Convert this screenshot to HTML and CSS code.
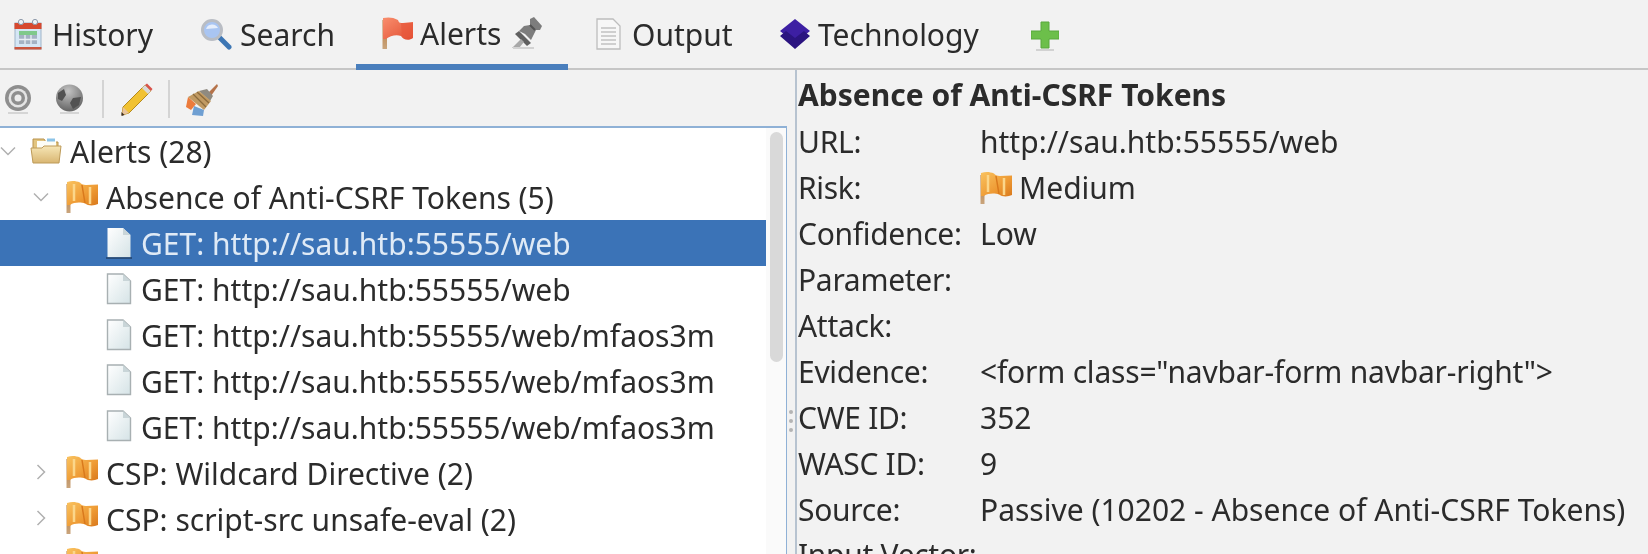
FILE: index.html
```html
<!DOCTYPE html>
<html lang="en">
<head>
  <meta charset="UTF-8" />
  <title>Alerts</title>
  <link rel="stylesheet" href="styles.css">
</head>
<body>
  <svg class="defs" width="0" height="0">
    <defs>
      <linearGradient id="flagOrange" x1="0" y1="0" x2="1" y2="1">
        <stop offset="0" stop-color="#f9c25f"/>
        <stop offset="0.6" stop-color="#ee9a34"/>
        <stop offset="1" stop-color="#d9791c"/>
      </linearGradient>
      <linearGradient id="flagRed" x1="0" y1="0" x2="1" y2="1">
        <stop offset="0" stop-color="#f98f6e"/>
        <stop offset="1" stop-color="#e14c30"/>
      </linearGradient>
      <linearGradient id="poleFade" x1="0" y1="0" x2="0" y2="1">
        <stop offset="0" stop-color="#b5783a"/>
        <stop offset="1" stop-color="#c9a47c"/>
      </linearGradient>
      <linearGradient id="docFill" x1="0" y1="0" x2="1" y2="1">
        <stop offset="0" stop-color="#ffffff"/>
        <stop offset="1" stop-color="#d5e3e6"/>
      </linearGradient>
      <linearGradient id="folderFill" x1="0" y1="0" x2="0" y2="1">
        <stop offset="0" stop-color="#f6e6b6"/>
        <stop offset="1" stop-color="#d9b672"/>
      </linearGradient>
      <radialGradient id="greyBall" cx="0.45" cy="0.25" r="0.8">
        <stop offset="0" stop-color="#c4c4c4"/>
        <stop offset="1" stop-color="#5e5e5e"/>
      </radialGradient>

      <symbol id="flag-orange" viewBox="0 0 32 32">
        <rect x="0.500" y="3" width="4" height="29" fill="url(#poleFade)"/>
        <path d="M1 1 C6 -0.500 10 0 14 1.500 C15 3 17 4 20 4 L32 3.500 L32 23 C28 25 22 25 19 22.500 C15 21 8 21 4 24 L1 24 Z" fill="url(#flagOrange)"/>
        <path d="M8 3 V20 M24 6 V23" stroke="#fbd68a" stroke-width="2.500" fill="none"/>
        <path d="M16 4 L19 22" stroke="#d9791c" stroke-width="1.500" fill="none"/>
      </symbol>
      <symbol id="flag-red" viewBox="0 0 31 32">
        <rect x="0.500" y="3" width="4.500" height="29" fill="url(#poleFade)"/>
        <path d="M1 1 C6 0 11 0 16 3 C17 6 18 6 21 6 L31 5 L31 21 C27 24 21 23 19 19 C14 17 8 19 4 22 L1 22 Z" fill="url(#flagRed)"/>
        <path d="M19 6 L20 19 L31 21 L31 6 Z" fill="#e8573a" opacity="0.6"/>
      </symbol>
      <symbol id="doc" viewBox="0 0 26 32">
        <path d="M1.500 1 H17 L24.500 8 V30.500 H1.500 Z" fill="url(#docFill)" stroke="#a8b0b2" stroke-width="1.400"/>
        <path d="M17 1 V8 H24.500 Z" fill="#c9d5d8"/>
      </symbol>
      <symbol id="doc-selected" viewBox="0 0 26 32">
        <path d="M1.500 1 H17 L24.500 8 V30.500 H1.500 Z" fill="url(#docFill)"/>
        <path d="M17 1 V8 H24.500 Z" fill="#c9d5d8"/>
        <path d="M0 31 H26" stroke="#24466f" stroke-width="1.600"/>
      </symbol>
      <symbol id="folder" viewBox="0 0 32 28">
        <path d="M3 2 H14 L16 5 H28 V12 H3 Z" fill="#e2c47f" stroke="#b8924d"/>
        <rect x="7" y="4" width="19" height="8" fill="#fdfdf6"/>
        <rect x="17" y="1.500" width="8" height="3" fill="#8cc4e8"/>
        <path d="M1 11 H12 L14 9 H31 L29 26 H3 Z" fill="url(#folderFill)" stroke="#bd9a58"/>
      </symbol>
      <symbol id="twisty-open" viewBox="0 0 16 10">
        <path d="M1 1.500 L8 8.500 L15 1.500" fill="none" stroke="#b0b0b0" stroke-width="1.500"/>
      </symbol>
      <symbol id="twisty-closed" viewBox="0 0 10 16">
        <path d="M1.500 1 L8.500 8 L1.500 15" fill="none" stroke="#b0b0b0" stroke-width="1.500"/>
      </symbol>
    </defs>
  </svg>

  <div class="tabs">
    <div class="tab tab-history">
      <svg class="tab-icon" width="28" height="32" viewBox="0 0 28 32">
        <rect x="1" y="5" width="26" height="26" fill="#d5e6f5" stroke="#9fb4c8"/>
        <rect x="0.500" y="5" width="27" height="6" fill="#d6492f"/>
        <rect x="0.500" y="29" width="27" height="2.500" fill="#c9553e"/>
        <circle cx="7" cy="4" r="2.600" fill="#eef3f7" stroke="#8b97a8"/>
        <circle cx="21" cy="4" r="2.600" fill="#eef3f7" stroke="#8b97a8"/>
        <rect x="5" y="13" width="18" height="4" fill="#7fc98b"/>
        <rect x="5" y="17" width="18" height="9" fill="#a4b2c4"/>
        <path d="M5 21.500 H23 M11 17 V26 M17 17 V26" stroke="#e8eef4" stroke-width="1.300"/>
      </svg>
      <span>History</span>
    </div>
    <div class="tab tab-search">
      <svg class="tab-icon" width="32" height="32" viewBox="0 0 32 32">
        <path d="M19 19 L29 29" stroke="#3d76b4" stroke-width="5" stroke-linecap="round"/>
        <circle cx="12" cy="12" r="9.500" fill="#a9c5f2" stroke="#b9bdc4" stroke-width="3"/>
        <path d="M6 11 A6.500 6.500 0 0 1 18 10 Z" fill="#e6eefb"/>
      </svg>
      <span>Search</span>
    </div>
    <div class="tab tab-alerts active">
      <svg class="tab-icon" width="31" height="32"><use href="#flag-red"/></svg>
      <span>Alerts</span>
      <svg class="pin" width="33" height="32" viewBox="0 0 33 32">
        <path d="M20 2 L24 0 L32 9 L30 13 L26 13 L21 23 L15 17 L9 14 L14 9 L20 8 Z" fill="#7d7d7d"/>
        <path d="M9 14 L21 26 L17 29 L5 17 Z" fill="#606060"/>
        <path d="M11 22 L2 31 L9 31 L14 25 Z" fill="#a8a8a8"/>
        <path d="M20 8 L25 13" stroke="#525252" stroke-width="2"/>
        <path d="M3 31 H24" stroke="#d2d2d2" stroke-width="2"/>
      </svg>
    </div>
    <div class="tab tab-output">
      <svg class="tab-icon" width="25" height="32" viewBox="0 0 25 32">
        <path d="M1 1 H17 L24 8 V31 H1 Z" fill="#f7f7f7" stroke="#bdbdbd" stroke-width="1.300"/>
        <path d="M5 10 H20 M5 14 H20 M5 18 H20 M5 22 H20 M5 26 H20" stroke="#c2c2c2" stroke-width="1.500"/>
      </svg>
      <span>Output</span>
    </div>
    <div class="tab tab-tech">
      <svg class="tab-icon" width="32" height="32" viewBox="0 0 32 32">
        <path d="M16 1 L31 13 L16 25 L1 13 Z" fill="#3d1fa3"/>
        <path d="M1 18 L7 13 L16 20 L25 13 L31 18 L16 31 Z" fill="#2b1480"/>
      </svg>
      <span>Technology</span>
    </div>
    <div class="tab tab-add">
      <svg width="28" height="32" viewBox="0 0 28 32">
        <path d="M10 2 H18 V11 H28 V19 H18 V28 H10 V19 H0 V11 H10 Z" fill="#6cbf4a" stroke="#58a83c"/>
        <path d="M5 30 H23" stroke="#d2d2d2" stroke-width="2"/>
      </svg>
    </div>
  </div>

  <div class="main">
    <div class="left-pane">
      <div class="toolbar">
        <svg class="tool tool-target" width="28" height="30" viewBox="0 0 28 30">
          <circle cx="14" cy="14" r="13" fill="#8e8e8e"/>
          <circle cx="14" cy="14" r="9.500" fill="#e4e4e4"/>
          <circle cx="14" cy="14" r="7" fill="#8e8e8e"/>
          <circle cx="14" cy="14" r="3.500" fill="#ececec"/>
          <path d="M4 29 H24" stroke="#d5d5d5" stroke-width="2"/>
        </svg>
        <svg class="tool tool-globe" width="29" height="30" viewBox="0 0 29 30">
          <circle cx="14.500" cy="14" r="13.500" fill="url(#greyBall)"/>
          <path d="M3 9 L9 5 L11 11 L7 17 L3 15 Z M18 14 L26 13 L24 21 L18 25 L15 19 Z" fill="#525252"/>
          <path d="M5 29 H24" stroke="#d5d5d5" stroke-width="2"/>
        </svg>
        <i class="sep sep-one"></i>
        <svg class="tool tool-pencil" width="33" height="33" viewBox="0 0 33 33">
          <path d="M25 2 L31 8 L9 30 L2 32 L3 24 Z" fill="#f1c232" stroke="#b58a1e"/>
          <path d="M25 2 L31 8 L28 11 L22 5 Z" fill="#d9d9d9"/>
          <path d="M27 0.500 L32.500 6 L31 8 L25 2 Z" fill="#d9534a"/>
          <path d="M3 24 L9 30 L2 32 Z" fill="#e8c39a"/>
          <path d="M1.500 29 L4.500 32 L1.500 33 Z" fill="#3a2a22"/>
        </svg>
        <i class="sep sep-two"></i>
        <svg class="tool tool-brush" width="32" height="33" viewBox="0 0 32 33">
          <path d="M22 10 L31 1 L32 3 L25 13 Z" fill="#b5734a"/>
          <path d="M21 6 L27 13 L24 18 L13 8 Z" fill="#8f8a80"/>
          <path d="M13 8 L25 18 L18 27 L2 14 Z" fill="#c19a62"/>
          <path d="M7 11 L20 24 M11 9 L23 20" stroke="#8b6a3b" stroke-width="1.300"/>
          <path d="M2 14 L10 21 L5 27 L0 24 Z" fill="#ec7b3c"/>
          <path d="M8 23 L18 27 L17 33 L6 32 Z" fill="#6f9fd2"/>
        </svg>
      </div>

      <div class="tree">
        <div class="tree-rows">
          <div class="row level-0">
            <svg class="twisty-open" width="16" height="10"><use href="#twisty-open"/></svg>
            <svg class="node-icon" width="32" height="28"><use href="#folder"/></svg>
            <span class="label">Alerts (28)</span>
          </div>
          <div class="row level-1">
            <svg class="twisty-open" width="16" height="10"><use href="#twisty-open"/></svg>
            <svg class="node-icon" width="32" height="32"><use href="#flag-orange"/></svg>
            <span class="label">Absence of Anti-CSRF Tokens (5)</span>
          </div>
          <div class="row level-2 selected">
            <svg class="node-icon" width="26" height="32"><use href="#doc-selected"/></svg>
            <span class="label">GET: http://sau.htb:55555/web</span>
          </div>
          <div class="row level-2">
            <svg class="node-icon" width="26" height="32"><use href="#doc"/></svg>
            <span class="label">GET: http://sau.htb:55555/web</span>
          </div>
          <div class="row level-2">
            <svg class="node-icon" width="26" height="32"><use href="#doc"/></svg>
            <span class="label">GET: http://sau.htb:55555/web/mfaos3m</span>
          </div>
          <div class="row level-2">
            <svg class="node-icon" width="26" height="32"><use href="#doc"/></svg>
            <span class="label">GET: http://sau.htb:55555/web/mfaos3m</span>
          </div>
          <div class="row level-2">
            <svg class="node-icon" width="26" height="32"><use href="#doc"/></svg>
            <span class="label">GET: http://sau.htb:55555/web/mfaos3m</span>
          </div>
          <div class="row level-1 closed">
            <svg class="twisty-closed" width="10" height="16"><use href="#twisty-closed"/></svg>
            <svg class="node-icon" width="32" height="32"><use href="#flag-orange"/></svg>
            <span class="label">CSP: Wildcard Directive (2)</span>
          </div>
          <div class="row level-1 closed">
            <svg class="twisty-closed" width="10" height="16"><use href="#twisty-closed"/></svg>
            <svg class="node-icon" width="32" height="32"><use href="#flag-orange"/></svg>
            <span class="label">CSP: script-src unsafe-eval (2)</span>
          </div>
          <div class="row level-1 closed">
            <svg class="twisty-closed hidden" width="10" height="16"></svg>
            <svg class="node-icon" width="32" height="32"><use href="#flag-orange"/></svg>
          </div>
        </div>
        <div class="scrollbar"><div class="thumb"></div></div>
      </div>
    </div>

    <div class="splitter"><i></i><i></i><i></i></div>

    <div class="details">
      <div class="title">Absence of Anti-CSRF Tokens</div>
      <div class="fields">
        <span>URL:</span><span>http://sau.htb:55555/web</span>
        <span>Risk:</span>
        <span class="risk"><svg width="32" height="32"><use href="#flag-orange"/></svg>Medium</span>
        <span>Confidence:</span><span>Low</span>
        <span>Parameter:</span><span></span>
        <span>Attack:</span><span></span>
        <span>Evidence:</span><span class="tight">&lt;form class="navbar-form navbar-right"&gt;</span>
        <span>CWE ID:</span><span>352</span>
        <span>WASC ID:</span><span>9</span>
        <span>Source:</span><span>Passive (10202 - Absence of Anti-CSRF Tokens)</span>
        <span>Input Vector:</span><span></span>
      </div>
    </div>
  </div>
</body>
</html>
```

FILE: styles.css
```css
html, body {
  margin: 0;
  height: 554px;
  overflow: hidden;
}

body {
  background-color: #f2f2f2;
  color: #2b2b2b;
  font-family: "Noto Sans", sans-serif;
  font-size: 30px;
}

/* the source image is a soft upscale */
svg, span, .title {
  filter: blur(0.4px);
}

.defs {
  display: block;
  height: 0;
}

/* top tab strip */
.tabs {
  display: flex;
  align-items: stretch;
  height: 68px;
  border-bottom: 2px solid #c6c6c6;
}

.tab {
  display: flex;
  align-items: center;
  box-sizing: border-box;
  height: 70px;
  padding-top: 2px;
  padding-bottom: 4px;
}

.tab svg {
  flex: none;
}

.tab-history { padding-left: 14px; width: 186px; }
.tab-history .tab-icon { margin-right: 10px; }
.tab-search  { padding-left: 14px; width: 170px; }
.tab-search .tab-icon { margin-right: 8px; }
.tab-alerts  { padding-left: 26px; width: 212px; }
.tab-alerts .tab-icon { margin-right: 7px; }
.tab-output  { padding-left: 28px; width: 211px; }
.tab-output .tab-icon { margin-right: 11px; }
.tab-tech    { width: 252px; }
.tab-tech .tab-icon { margin-right: 7px; }
.tab-add     { padding-top: 6px; }

.active {
  border-bottom: 6px solid #4a7fbd;
  padding-bottom: 0;
}

.pin {
  margin-left: 9px;
}

.main {
  display: flex;
  height: 484px;
}

.left-pane {
  width: 787px;
  flex: none;
}

.toolbar {
  display: flex;
  align-items: center;
  box-sizing: border-box;
  height: 56px;
  padding: 2px 0 0 4px;
}

.tool { flex: none; }
.tool-globe  { margin-left: 23px; }
.tool-pencil { margin-left: 16px; }
.tool-brush  { margin-left: 16px; }

.sep {
  display: block;
  width: 2px;
  height: 38px;
  background-color: #d4d4d4;
}

.sep-one { margin-left: 18px; }
.sep-two { margin-left: 15px; }

.tree {
  display: flex;
  height: 428px;
  background-color: #fff;
  border: 2px solid #8fb1d6;
  border-width: 2px 2px 0 0;
}

.tree-rows {
  width: 766px;
  flex: none;
}

.row {
  display: flex;
  align-items: center;
  height: 45.9px;
  white-space: nowrap;
}

.label {
  padding-top: 2px;
}

.level-0 { padding-left: 0; }
.level-0 .twisty-open { margin-right: 14px; }
.level-0 .node-icon { margin-right: 8px; }

.level-1 { padding-left: 33px; }
.level-1 .twisty-open { margin-right: 17px; }
.level-1 .node-icon { margin-right: 8px; }

.closed { padding-left: 36px; }
.closed .twisty-closed { margin-right: 20px; }

.level-2 { padding-left: 106px; }
.level-2 .node-icon { margin-right: 9px; }

.selected {
  background-color: #3b73b7;
  color: #dfeaf6;
}

.scrollbar {
  flex: 1;
  padding: 4px 3px 0 4px;
  background-color: #fafafa;
}

.thumb {
  width: 13px;
  height: 230px;
  border-radius: 7px;
  background-color: #d9d9d9;
}

.splitter {
  width: 8px;
  flex: none;
  display: flex;
  flex-direction: column;
  align-items: center;
  gap: 5px;
  padding-top: 340px;
  box-sizing: border-box;
}

.splitter i {
  display: block;
  width: 4px;
  height: 4px;
  border-radius: 2px;
  background-color: #b4b4b4;
}

.details {
  flex: 1;
  padding: 2px 0 0 1px;
  border-left: 2px solid #b7c3d0;
}

.title {
  height: 46px;
  line-height: 46px;
  font-weight: 700;
}

.fields {
  display: grid;
  grid-template-columns: 182px 1fr;
  grid-auto-rows: 45.9px;
  align-items: center;
  margin-top: 1px;
  white-space: nowrap;
}

.fields span:nth-child(odd) {
  letter-spacing: -0.3px;
}

.tight {
  letter-spacing: -0.2px;
}

.risk {
  display: flex;
  align-items: center;
  gap: 7px;
}
```
